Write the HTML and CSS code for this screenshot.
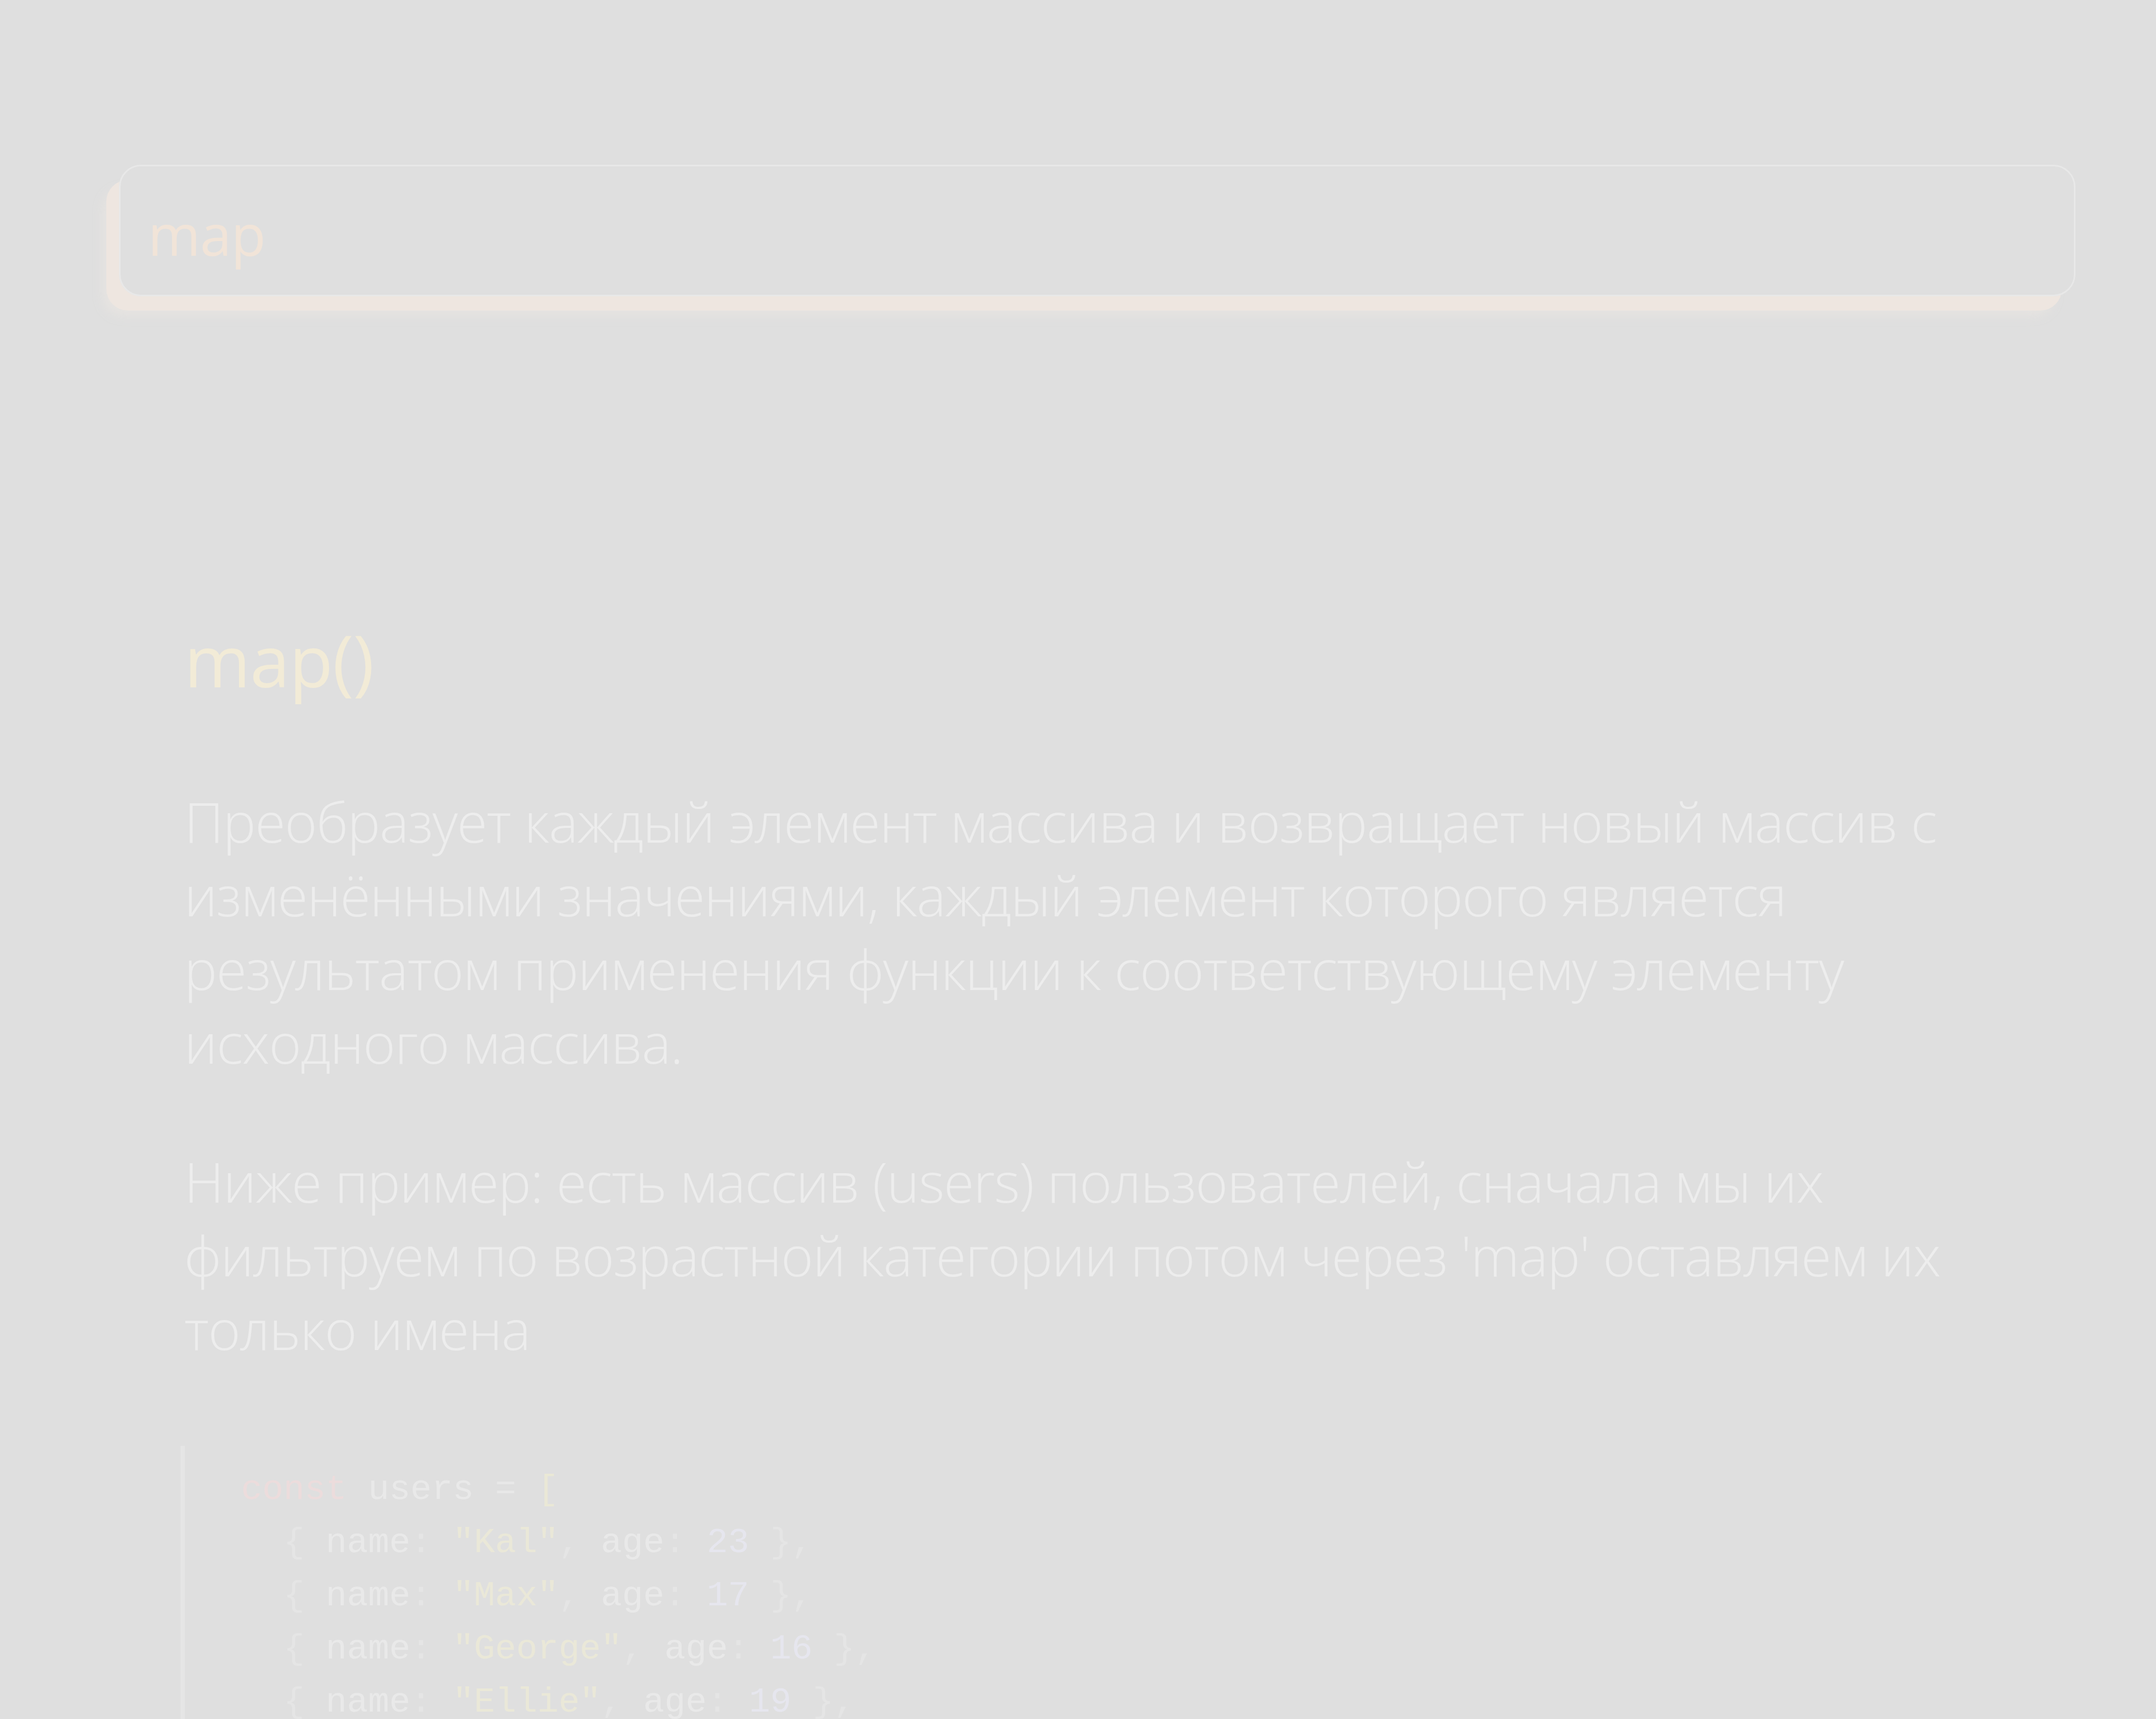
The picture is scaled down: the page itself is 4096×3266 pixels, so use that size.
FILE: index.html
```html
<!DOCTYPE html>
<html lang="ru">
<head>
<meta charset="utf-8">
<title>map()</title>
<link rel="stylesheet" href="styles.css">
</head>
<body>
<div class="page">
  <div class="search-wrap">
    <div class="search">map</div>
  </div>
  <main class="content">
    <h1 class="title">map()</h1>
    <p class="text">Преобразует каждый элемент массива и возвращает новый массив с изменёнными значениями, каждый элемент которого является результатом применения функции к соответствующему элементу исходного массива.</p>
    <p class="text">Ниже пример: есть массив (users) пользователей, сначала мы их фильтруем по возрастной категории потом через 'map' оставляем их только имена</p>
    <pre class="code"><code><span class="kw">const</span> <span class="id">users</span> <span class="op">=</span> <span class="br">[</span>
  <span class="pn">{</span> <span class="id">name</span><span class="pn">:</span> <span class="str">"Kal"</span><span class="pn">,</span> <span class="id">age</span><span class="pn">:</span> <span class="num">23</span> <span class="pn">},</span>
  <span class="pn">{</span> <span class="id">name</span><span class="pn">:</span> <span class="str">"Max"</span><span class="pn">,</span> <span class="id">age</span><span class="pn">:</span> <span class="num">17</span> <span class="pn">},</span>
  <span class="pn">{</span> <span class="id">name</span><span class="pn">:</span> <span class="str">"George"</span><span class="pn">,</span> <span class="id">age</span><span class="pn">:</span> <span class="num">16</span> <span class="pn">},</span>
  <span class="pn">{</span> <span class="id">name</span><span class="pn">:</span> <span class="str">"Ellie"</span><span class="pn">,</span> <span class="id">age</span><span class="pn">:</span> <span class="num">19</span> <span class="pn">},</span>
<span class="br">]</span><span class="pn">;</span>

<span class="kw">const</span> <span class="id">names</span> <span class="op">=</span> <span class="id">users</span>
  <span class="pn">.</span><span class="id">filter</span><span class="pn">(</span><span class="id">user</span> <span class="op">=&gt;</span> <span class="id">user</span><span class="pn">.</span><span class="id">age</span> <span class="op">&gt;=</span> <span class="num">18</span><span class="pn">)</span>
  <span class="pn">.</span><span class="id">map</span><span class="pn">(</span><span class="id">user</span> <span class="op">=&gt;</span> <span class="id">user</span><span class="pn">.</span><span class="id">name</span><span class="pn">);</span></code></pre>
  </main>
</div>
</body>
</html>
```

FILE: styles.css
```css
html, body {
  margin: 0;
  padding: 0;
  background: #dfdfdf;
}

body {
  font-family: "Open Sans", "Noto Sans", sans-serif;
  overflow: hidden;
}

.page {
  display: flex;
  flex-direction: column;
}

.search-wrap {
  padding: 313px 153px 0 226px;
}

.search {
  box-sizing: border-box;
  height: 250px;
  padding: 14px 52px 0;
  display: flex;
  align-items: center;
  border: 3px solid #e8e8e8;
  border-radius: 42px;
  box-shadow: -25px 28px 0 -1px #eee6e0, -36px 42px 22px -6px rgba(232, 228, 225, 0.9);
  font-size: 108px;
  font-weight: 400;
  letter-spacing: -1px;
  color: #f1e4d8;
  line-height: 1;
}

.content {
  padding: 611px 300px 0 350px;
  display: flex;
  flex-direction: column;
}

.title {
  margin: 0 0 157px;
  font-size: 136px;
  line-height: 160px;
  font-weight: 400;
  letter-spacing: -1px;
  color: #f2ebd7;
}

.text {
  margin: 0 0 124px;
  font-size: 105px;
  line-height: 140px;
  font-weight: 300;
  letter-spacing: -1.4px;
  color: #ededed;
}

.code {
  margin: 28px 0 0 -7px;
  padding: 33px 60px 40px 107px;
  border-left: 8px solid #e5e5e5;
  background: transparent;
  font-family: "Liberation Mono", "DejaVu Sans Mono", monospace;
  font-size: 67px;
  line-height: 101px;
  color: #e9e9e9;
}

.code code {
  font-family: inherit;
}

.kw { color: #ecdcdc; }
.id { color: #e9e9e9; }
.op { color: #e8e8e8; }
.br { color: #eae8d6; }
.pn { color: #e5e5e5; }
.str { color: #eae8d8; }
.num { color: #e6e6ee; }
```
